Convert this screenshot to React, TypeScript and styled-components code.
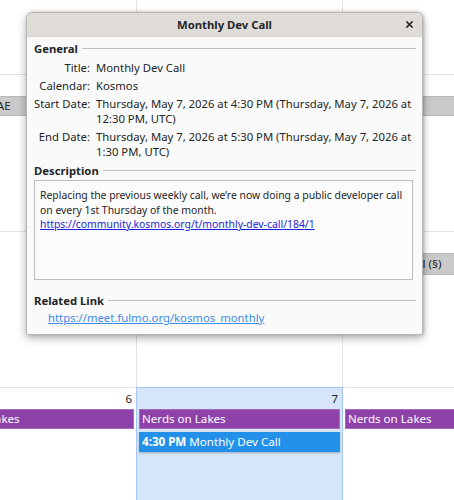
import React from "react";
import styled, { createGlobalStyle } from "styled-components";

const Global = createGlobalStyle`
  html, body { margin: 0; padding: 0; background: #ffffff; }
  body { font-family: "Noto Sans", "Open Sans", sans-serif; }
`;

const Screen = styled.div`
  position: relative;
  width: 454px;
  height: 500px;
  overflow: hidden;
  background: #ffffff;
  font-family: "Noto Sans", "Open Sans", sans-serif;
  font-size: 11.3px;
  color: #232627;
`;

const Month = styled.div`
  display: flex;
  flex-direction: column;
  margin-left: -69px;
  margin-top: -82px;
`;

const Week = styled.div<{ $h: number }>`
  display: grid;
  grid-template-columns: repeat(3, 206px);
  grid-template-rows: 21px 20px 3px 20px 1fr;
  height: ${(p) => p.$h}px;
`;

const Cell = styled.div<{ $col: number; $today?: boolean }>`
  grid-column: ${(p) => p.$col};
  grid-row: 1 / -1;
  box-sizing: border-box;
  border-right: 1px solid #e2e2e2;
  border-bottom: 1px solid #e2e2e2;
  background: ${(p) => (p.$today ? "#d6e5f8" : "#ffffff")};
  ${(p) =>
    p.$today
      ? `border: 1px solid #a3c7f0; margin-top: -1px; margin-left: -1px;`
      : ""}
`;

const DayNum = styled.div`
  height: 21px;
  line-height: 21px;
  padding-right: 4px;
  text-align: right;
  font-size: 11.5px;
  color: #232627;
`;

const Bar = styled.div<{ $from: number; $to: number; $row: number; $kind: "purple" | "gray" | "blue"; $tall?: boolean }>`
  grid-column: ${(p) => p.$from} / ${(p) => p.$to};
  grid-row: ${(p) => p.$row};
  margin: 0 3px 0 2px;
  box-sizing: border-box;
  height: ${(p) => (p.$tall ? 22 : 20)}px;
  line-height: ${(p) => (p.$tall ? 20 : 18)}px;
  padding-left: 2px;
  white-space: nowrap;
  overflow: hidden;
  font-size: 11.6px;
  ${(p) =>
    p.$kind === "purple"
      ? `background: #8e41a9; border: 1px solid #a56cbd; color: #ffffff;`
      : p.$kind === "gray"
      ? `background: #cacaca; border: 1px solid #b8b8b8; color: #232627;`
      : `background: #2390ea; border: 1px solid #2390ea; color: #ffffff; box-shadow: 0 1px 2px rgba(0,0,0,0.25);`}
`;

const Time = styled.b`
  font-weight: 700;
`;

const Dialog = styled.div`
  position: absolute;
  left: 26px;
  top: 12px;
  width: 397px;
  box-sizing: border-box;
  border: 1px solid #b9b6b3;
  border-radius: 6px 6px 2px 2px;
  background: #fafafa;
  box-shadow: 0 3px 9px rgba(0, 0, 0, 0.32), 1px 0 3px rgba(0, 0, 0, 0.18);
  overflow: hidden;
`;

const TitleBar = styled.div`
  display: grid;
  grid-template-columns: 1fr auto 1fr;
  align-items: center;
  height: 23px;
  background: #dfdcd8;
  border-bottom: 1px solid #d6d3cf;
`;

const TitleText = styled.div`
  grid-column: 2;
  font-weight: 700;
  font-size: 11.3px;
  color: #232627;
`;

const CloseBtn = styled.button`
  grid-column: 3;
  justify-self: end;
  margin-right: 8px;
  width: 9px;
  height: 9px;
  padding: 0;
  border: 0;
  background: transparent;
  display: flex;
  align-items: center;
  justify-content: center;
`;

const Body = styled.div`
  display: flex;
  flex-direction: column;
  padding: 4px 6px 9px 7px;
  line-height: 15px;
`;

const SectionHead = styled.div<{ $mt?: number }>`
  display: flex;
  align-items: center;
  gap: 4px;
  margin-top: ${(p) => p.$mt ?? 0}px;
  font-weight: 700;
  color: #232627;
  &::after {
    content: "";
    flex: 1;
    height: 1px;
    background: #bfbfbf;
  }
`;

const Fields = styled.div`
  display: grid;
  grid-template-columns: 56px 1fr;
  column-gap: 6px;
  row-gap: 3px;
  margin-top: 4px;
`;

const Label = styled.div`
  text-align: right;
  white-space: nowrap;
`;

const Value = styled.div``;

const DescBox = styled.div`
  margin: 2px 3px 0 0;
  height: 100px;
  box-sizing: border-box;
  border: 1px solid #bcbcbc;
  background: #fbfbfb;
  padding: 7px 4px 6px 5px;
  font-size: 10.4px;
  line-height: 14.5px;
`;

const DescLine = styled.div`
  white-space: nowrap;
`;

const DescLink = styled.a`
  color: #1d1ddb;
  text-decoration: underline;
`;

const RelLink = styled.a`
  margin: 2px 0 0 14px;
  color: #3a8ce6;
  text-decoration: underline;
  align-self: flex-start;
`;

const CloseIcon = () => (
  <svg width="7" height="7" viewBox="0 0 7 7">
    <path d="M1 1 L6 6 M6 1 L1 6" stroke="#232627" strokeWidth="1.6" strokeLinecap="square" />
  </svg>
);

export default function App() {
  return (
    <Screen>
      <Global />
      <Month>
        <Week $h={157}>
          <Cell $col={1} />
          <Cell $col={2} />
          <Cell $col={3} />
        </Week>
        <Week $h={157}>
          <Cell $col={1} />
          <Cell $col={2} />
          <Cell $col={3} />
          <Bar $from={1} $to={4} $row={2} $kind="gray">Bitcoin Ltd AE</Bar>
        </Week>
        <Week $h={156}>
          <Cell $col={1} />
          <Cell $col={2} />
          <Cell $col={3} />
          <Bar $from={3} $to={4} $row={2} $kind="gray" $tall>Kosmos Social (§)</Bar>
        </Week>
        <Week $h={160}>
          <Cell $col={1}><DayNum>6</DayNum></Cell>
          <Cell $col={2} $today><DayNum>7</DayNum></Cell>
          <Cell $col={3} />
          <Bar $from={1} $to={2} $row={2} $kind="purple">Nerds on Lakes</Bar>
          <Bar $from={2} $to={3} $row={2} $kind="purple">Nerds on Lakes</Bar>
          <Bar $from={3} $to={4} $row={2} $kind="purple">Nerds on Lakes</Bar>
          <Bar $from={2} $to={3} $row={4} $kind="blue">
            <Time>4:30 PM</Time> Monthly Dev Call
          </Bar>
        </Week>
      </Month>

      <Dialog>
        <TitleBar>
          <TitleText>Monthly Dev Call</TitleText>
          <CloseBtn aria-label="Close"><CloseIcon /></CloseBtn>
        </TitleBar>
        <Body>
          <SectionHead>General</SectionHead>
          <Fields>
            <Label>Title:</Label>
            <Value>Monthly Dev Call</Value>
            <Label>Calendar:</Label>
            <Value>Kosmos</Value>
            <Label>Start Date:</Label>
            <Value>Thursday, May 7, 2026 at 4:30 PM (Thursday, May 7, 2026 at 12:30 PM, UTC)</Value>
            <Label>End Date:</Label>
            <Value>Thursday, May 7, 2026 at 5:30 PM (Thursday, May 7, 2026 at 1:30 PM, UTC)</Value>
          </Fields>
          <SectionHead $mt={4}>Description</SectionHead>
          <DescBox>
            <DescLine>Replacing the previous weekly call, we’re now doing a public developer call</DescLine>
            <DescLine>on every 1st Thursday of the month.</DescLine>
            <DescLine>
              <DescLink href="#">https://community.kosmos.org/t/monthly-dev-call/184/1</DescLink>
            </DescLine>
          </DescBox>
          <SectionHead $mt={13}>Related Link</SectionHead>
          <RelLink href="#">https://meet.fulmo.org/kosmos_monthly</RelLink>
        </Body>
      </Dialog>
    </Screen>
  );
}
